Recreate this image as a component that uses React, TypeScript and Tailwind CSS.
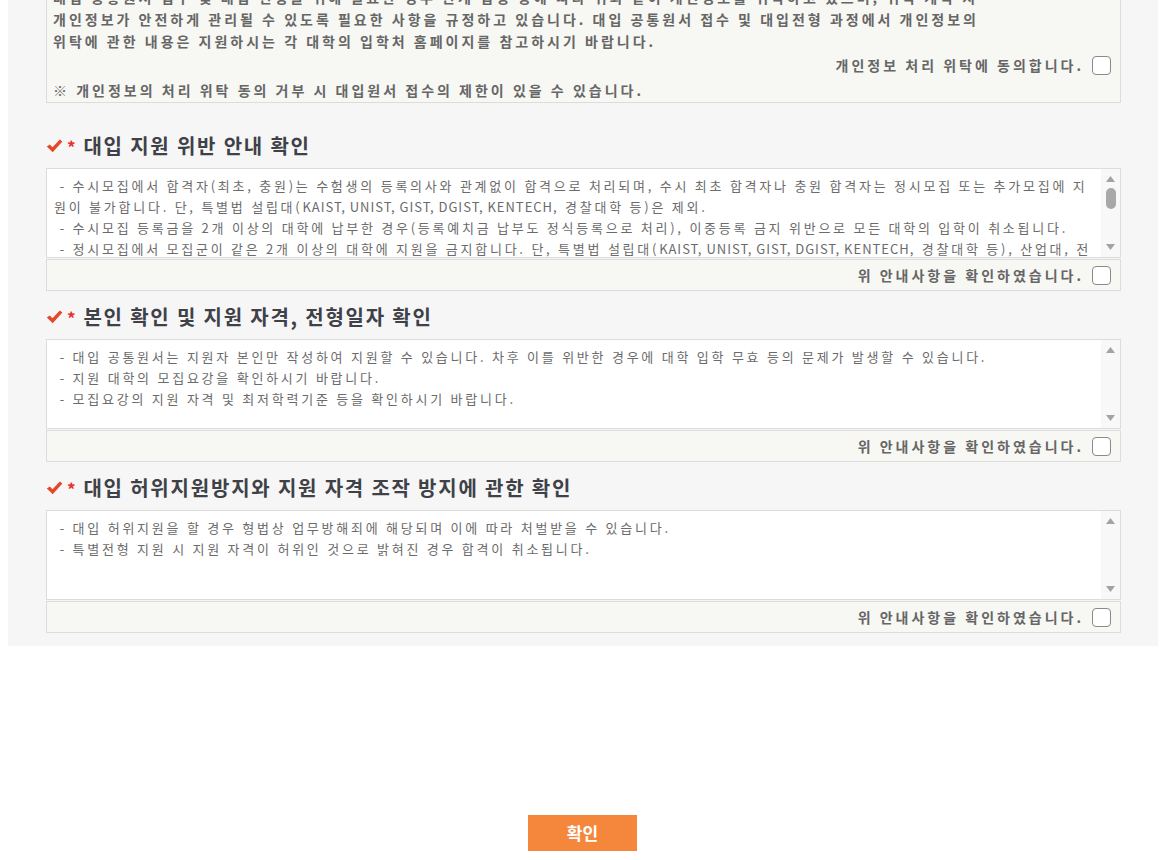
import React from "react";

const FONT = { fontFamily: '"Noto Sans CJK KR", "Noto Sans", sans-serif' };

type Section = {
  title: string;
  lines: string[];
  thumb?: boolean;
};

const sections: Section[] = [
  {
    title: "대입 지원 위반 안내 확인",
    thumb: true,
    lines: [
      " - 수시모집에서 합격자(최초, 충원)는 수험생의 등록의사와 관계없이 합격으로 처리되며, 수시 최초 합격자나 충원 합격자는 정시모집 또는 추가모집에 지",
      "원이 불가합니다. 단, 특별법 설립대(KAIST, UNIST, GIST, DGIST, KENTECH, 경찰대학 등)은 제외.",
      " - 수시모집 등록금을 2개 이상의 대학에 납부한 경우(등록예치금 납부도 정식등록으로 처리), 이중등록 금지 위반으로 모든 대학의 입학이 취소됩니다.",
      " - 정시모집에서 모집군이 같은 2개 이상의 대학에 지원을 금지합니다. 단, 특별법 설립대(KAIST, UNIST, GIST, DGIST, KENTECH, 경찰대학 등), 산업대, 전",
      "문대학은 제외.",
    ],
  },
  {
    title: "본인 확인 및 지원 자격, 전형일자 확인",
    lines: [
      " - 대입 공통원서는 지원자 본인만 작성하여 지원할 수 있습니다. 차후 이를 위반한 경우에 대학 입학 무효 등의 문제가 발생할 수 있습니다.",
      " - 지원 대학의 모집요강을 확인하시기 바랍니다.",
      " - 모집요강의 지원 자격 및 최저학력기준 등을 확인하시기 바랍니다.",
    ],
  },
  {
    title: "대입 허위지원방지와 지원 자격 조작 방지에 관한 확인",
    lines: [
      " - 대입 허위지원을 할 경우 형법상 업무방해죄에 해당되며 이에 따라 처벌받을 수 있습니다.",
      " - 특별전형 지원 시 지원 자격이 허위인 것으로 밝혀진 경우 합격이 취소됩니다.",
    ],
  },
];

// latin runs look much tighter than hangul in the original
function Line({ text }: { text: string }) {
  const parts = text.split(/([A-Z][A-Z, ]*[A-Z])/);
  return (
    <p className="whitespace-pre">
      {parts.map((p, i) =>
        i % 2 === 1 ? (
          <span key={i} className="tracking-[1px]">
            {p}
          </span>
        ) : (
          <React.Fragment key={i}>{p}</React.Fragment>
        )
      )}
    </p>
  );
}

function CheckBox() {
  return (
    <span className="inline-block h-[19px] w-[19px] shrink-0 rounded-[4px] border border-[#8a8a8a] bg-white" />
  );
}

function CheckMark() {
  return (
    <svg width="17" height="14" viewBox="0 0 17 14" className="shrink-0">
      <path
        d="M0.8 7.6 L3.8 5.4 L6.5 8.2 L13.8 0.6 L16.4 2.6 L6.7 13.2 Z"
        fill="#e5472a"
      />
    </svg>
  );
}

function ScrollBar({ thumb }: { thumb?: boolean }) {
  return (
    <div className="flex w-[19px] shrink-0 flex-col items-center bg-[#f8f8f8] py-[7px]">
      <svg width="9" height="6" viewBox="0 0 9 6">
        <path d="M0 6 L4.5 0 L9 6 Z" fill="#a3a3a3" />
      </svg>
      <div className="flex-1 pt-[6px]">
        {thumb && <div className="h-[21px] w-[10px] rounded-[5px] bg-[#a8a8a8]" />}
      </div>
      <svg width="9" height="6" viewBox="0 0 9 6">
        <path d="M0 0 L9 0 L4.5 6 Z" fill="#a3a3a3" />
      </svg>
    </div>
  );
}

function ConfirmRow({ label }: { label: string }) {
  return (
    <div className="mt-[1px] flex h-[32px] items-center justify-end gap-[8px] border border-[#dcdcdc] bg-[#f7f7f4] pr-[9px]">
      <span className="text-[14px] font-bold tracking-[3px] text-[#666]">{label}</span>
      <CheckBox />
    </div>
  );
}

export default function App() {
  return (
    <div className="min-h-[860px] bg-white" style={FONT}>
      <div className="ml-[8px] mr-[7px] bg-[#f6f6f6] pb-[13px] pl-[38px] pr-[37px]">
        <div className="-mt-[22px] border border-[#dcdcdc] bg-[#f7f7f4] pb-[1px] pl-[6px] pr-[9px] pt-[7px]">
          <div className="text-[14px] font-bold leading-[22px] tracking-[3px] text-[#666]">
            <p className="whitespace-nowrap">
              대입 공통원서 접수 및 대입 전형을 위해 필요한 경우 관계 법령 등에 따라 위와 같이 개인정보를 위탁하고 있으며, 위탁 계약 시
            </p>
            <p className="whitespace-nowrap">
              개인정보가 안전하게 관리될 수 있도록 필요한 사항을 규정하고 있습니다. 대입 공통원서 접수 및 대입전형 과정에서 개인정보의
            </p>
            <p className="whitespace-nowrap">위탁에 관한 내용은 지원하시는 각 대학의 입학처 홈페이지를 참고하시기 바랍니다.</p>
          </div>
          <div className="flex h-[27px] items-center justify-end gap-[8px]">
            <span className="text-[14px] font-bold tracking-[3px] text-[#666]">개인정보 처리 위탁에 동의합니다.</span>
            <CheckBox />
          </div>
          <p className="text-[14px] font-bold leading-[22px] tracking-[3px] text-[#666]">
            ※ 개인정보의 처리 위탁 동의 거부 시 대입원서 접수의 제한이 있을 수 있습니다.
          </p>
        </div>

        {sections.map((s, i) => (
          <section key={s.title} className={i === 0 ? "pt-[31px]" : "pt-[14px]"}>
            <h2 className="flex h-[24px] items-center gap-[4px] text-[20px] font-bold tracking-[1.8px] text-[#3f4148]">
              <CheckMark />
              <span className="text-[17px] leading-none text-[#e8302b]">*</span>
              <span className="ml-[2px]">{s.title}</span>
            </h2>
            <div className="mt-[10px] flex h-[90px] border border-[#dcdcdc] bg-white">
              <div className="flex-1 overflow-hidden pl-[7px] pt-[6px] text-[13px] leading-[21px] tracking-[2.75px] text-[#6b6b6b]">
                {s.lines.map((l) => (
                  <Line key={l} text={l} />
                ))}
              </div>
              <ScrollBar thumb={s.thumb} />
            </div>
            <ConfirmRow label="위 안내사항을 확인하였습니다." />
          </section>
        ))}
      </div>

      <div className="flex justify-center pt-[169px]">
        <button className="h-[36px] w-[109px] bg-[#f4873c] text-[17px] font-bold text-white">확인</button>
      </div>
    </div>
  );
}
